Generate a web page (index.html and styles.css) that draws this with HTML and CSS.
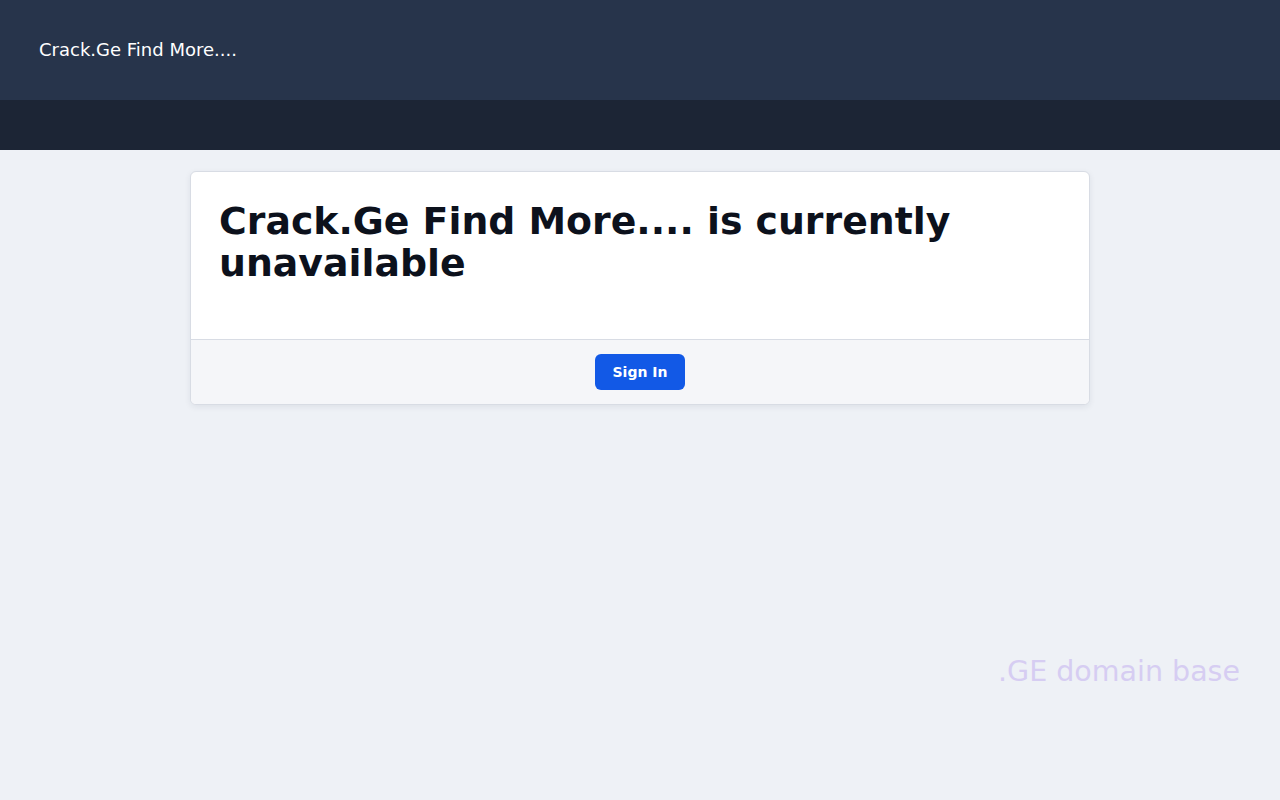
FILE: index.html
```html
<!DOCTYPE html>
<html lang="en">
<head>
<meta charset="utf-8">
<title>Crack.Ge Find More....</title>
<link rel="stylesheet" href="styles.css">
</head>
<body>
<header class="topbar">
  <div class="brand">Crack.Ge Find More....</div>
</header>
<div class="subbar"></div>
<main class="content">
  <section class="card">
    <div class="card-body">
      <h1 class="title">Crack.Ge Find More.... is currently unavailable</h1>
    </div>
    <div class="card-footer">
      <button class="btn">Sign In</button>
    </div>
  </section>
</main>
<div class="watermark">.GE domain base</div>
</body>
</html>
```
FILE: styles.css
```css
* { box-sizing: border-box; }
html, body { margin: 0; padding: 0; }
body {
  font-family: "DejaVu Sans", sans-serif;
  background: #eef1f6;
  min-height: 800px;
  display: flex;
  flex-direction: column;
}
.topbar {
  height: 100px;
  background: #27344b;
  display: flex;
  align-items: center;
  padding: 0 39px 2px;
}
.brand {
  color: #ffffff;
  font-size: 18px;
}
.subbar {
  height: 50px;
  background: #1c2535;
}
.content {
  display: flex;
  justify-content: center;
  padding-top: 21px;
}
.card {
  width: 900px;
  background: #ffffff;
  border: 1px solid #d8dce4;
  border-radius: 6px;
  box-shadow: 0 2px 6px rgba(30, 40, 60, 0.08);
  overflow: hidden;
}
.card-body {
  padding: 28px 28px 55px;
}
.title {
  margin: 0;
  font-size: 37.8px;
  line-height: 42px;
  font-weight: bold;
  color: #0c111c;
}
.card-footer {
  background: #f5f6f9;
  border-top: 1px solid #d8dce4;
  display: flex;
  justify-content: center;
  padding: 14px 0;
}
.btn {
  font-family: "DejaVu Sans", sans-serif;
  font-size: 14px;
  font-weight: bold;
  color: #ffffff;
  background: #1259e6;
  border: 0;
  border-radius: 6px;
  width: 90px;
  height: 36px;
  padding: 0;
}
.watermark {
  margin-top: auto;
  align-self: flex-end;
  padding: 0 40px 112px 0;
  font-size: 28.5px;
  color: #d6cdf2;
}
```
